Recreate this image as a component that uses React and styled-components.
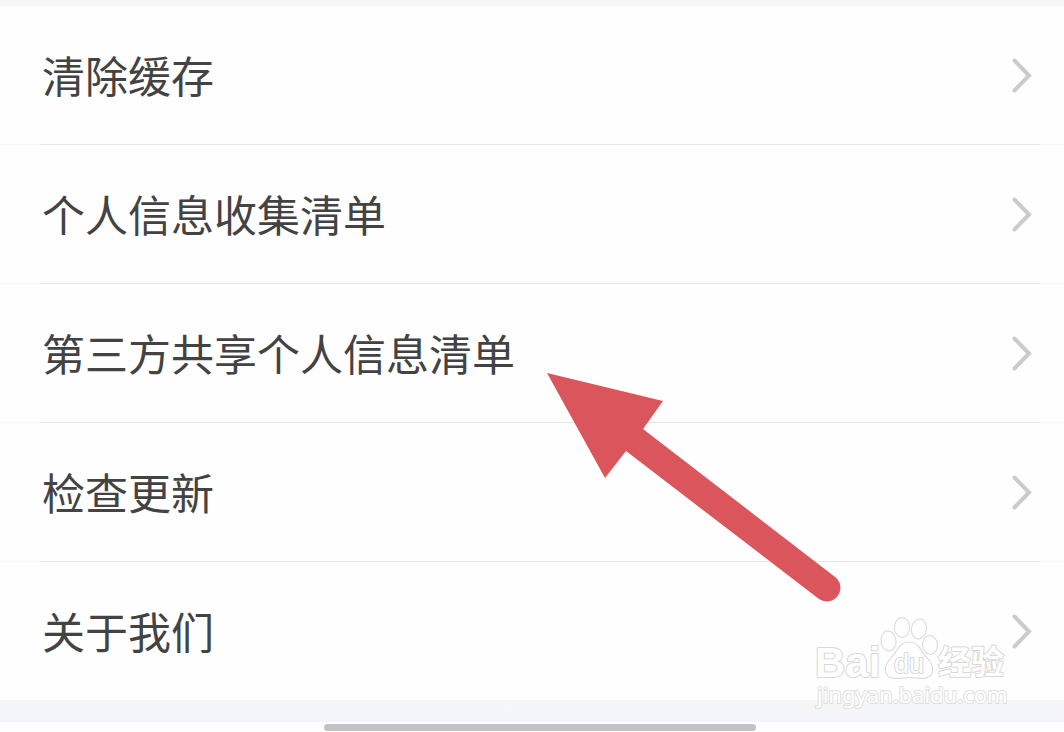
import styled, { createGlobalStyle } from "styled-components";

const GlobalStyle = createGlobalStyle`
  * {
    box-sizing: border-box;
  }

  body {
    margin: 0;
    background-color: #fefefe;
    font-family: "Noto Sans CJK SC", "Noto Sans", sans-serif;
  }
`;

const Page = styled.main`
  position: relative;
  overflow: hidden;
`;

const Band = styled.div`
  height: ${(props) => props.$height};
  background: ${(props) => props.$background};
`;

const Menu = styled.ul`
  margin: 0;
  padding: 0;
  list-style: none;
`;

const MenuItem = styled.li`
  border-bottom: 1px solid #f8f8f8;

  &:last-child {
    border-bottom: none;
  }
`;

const MenuLink = styled.a`
  display: flex;
  align-items: center;
  justify-content: space-between;
  height: 138px;
  padding: 0 32px 0 42px;
  color: #434343;
  font-size: 43px;
  line-height: 64px;
  text-decoration: none;
`;

const Label = styled.span`
  padding-bottom: 2px;
`;

const Divider = styled.div`
  height: 1px;
  margin: 0 24px -1px 40px;
  background-color: #e8e8e8;
`;

const ChevronIcon = styled.svg`
  flex: none;
  width: 20px;
  height: 36px;
  fill: none;
  stroke: #cbcbcb;
  stroke-width: 4;
  stroke-linecap: round;
`;

const HomeArea = styled.div`
  display: flex;
  justify-content: center;
  padding: 2px 0 1px 16px;
`;

const HomeBar = styled.div`
  width: 432px;
  height: 7px;
  border-radius: 4px;
  background-color: #c1c3c4;
`;

const Arrow = styled.svg`
  position: absolute;
  top: 372px;
  left: 546px;
  width: 296px;
  height: 231px;
  fill: #db565c;
  pointer-events: none;
`;

const Watermark = styled.svg`
  position: absolute;
  right: 54px;
  bottom: 20px;
  width: 196px;
  height: 100px;
  fill: #fefefe;
  stroke: #d8d8d8;
  stroke-width: 2;
  stroke-linejoin: round;
  paint-order: stroke;
  pointer-events: none;
`;

const items = [
  "清除缓存",
  "个人信息收集清单",
  "第三方共享个人信息清单",
  "检查更新",
  "关于我们",
];

const Chevron = () => (
  <ChevronIcon viewBox="0 0 20 36" aria-hidden="true">
    <path d="M2.5 3.5 17 18.5 2.5 33.5" />
  </ChevronIcon>
);

const Row = ({ label, last }) => (
  <MenuItem>
    <MenuLink href="#">
      <Label>{label}</Label>
      <Chevron />
    </MenuLink>
    {!last && <Divider />}
  </MenuItem>
);

export const App = () => {
  return (
    <Page>
      <GlobalStyle />
      <Band $height="6px" $background="#f7f7f7" />
      <Menu>
        {items.map((label, index) => (
          <Row key={label} label={label} last={index === items.length - 1} />
        ))}
      </Menu>
      <Band $height="22px" $background="linear-gradient(#f6f6f7, #f4f5fb)" />
      <HomeArea>
        <HomeBar />
      </HomeArea>

      <Arrow viewBox="0 0 296 231" aria-hidden="true">
        <path d="M1 1 117 29 97 57 288.500 204.500A13.500 13.500 0 0 1 273 227L80 79 59 106Z" />
      </Arrow>

      <Watermark viewBox="0 0 196 100">
        <text x="1" y="65" fontSize="42" fontWeight="700" fontFamily="Liberation Sans, sans-serif">
          Bai
        </text>
        <ellipse cx="74.500" cy="29" rx="7" ry="9.500" transform="rotate(-8 74.500 29)" />
        <ellipse cx="88" cy="15.500" rx="7" ry="9.500" />
        <ellipse cx="105" cy="17" rx="7" ry="9.500" transform="rotate(8 105 17)" />
        <ellipse cx="116" cy="33" rx="7" ry="9" transform="rotate(-6 116 33)" />
        <path d="M95 30.500C87 30.500 84 37 81 42C78 46 73 49 72 56C71 63 76 66 82 66C87 66 91 65 95 65C99 65 103 66 108 66C114 66 119 63 118 56C117 49 112 46 109 42C106 37 103 30.500 95 30.500Z" />
        <text x="80" y="61" fontSize="27" fontFamily="Liberation Sans, sans-serif">
          du
        </text>
        <text x="124" y="62" fontSize="33" fontWeight="700">
          经验
        </text>
        <text x="3" y="91" fontSize="22" stroke="#e0e0e0" fontFamily="Noto Sans, sans-serif">
          jingyan.baidu.com
        </text>
      </Watermark>
    </Page>
  );
};

export default App;
